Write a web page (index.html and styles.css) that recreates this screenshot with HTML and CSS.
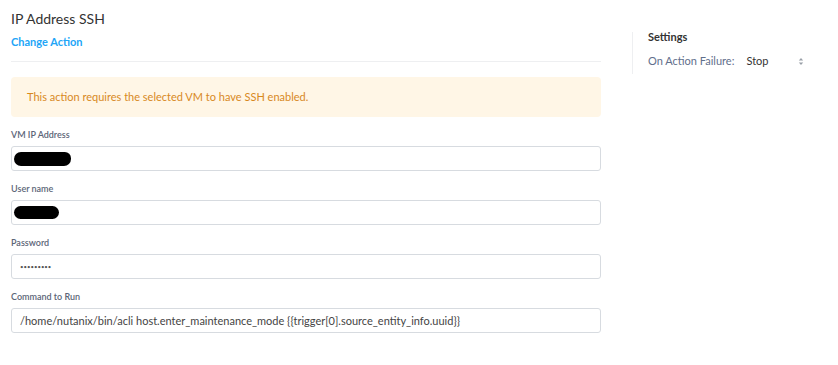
FILE: index.html
```html
<!DOCTYPE html>
<html>
<head>
<meta charset="utf-8">
<link rel="stylesheet" href="styles.css">
</head>
<body>
<div class="page">
  <div class="main">
    <h1 class="title">IP Address SSH</h1>
    <a class="change">Change Action</a>
    <div class="divider"></div>
    <div class="warning">This action requires the selected VM to have SSH enabled.</div>
    <div class="field">
      <div class="label">VM IP Address</div>
      <div class="input"><span class="mask mask1"></span></div>
    </div>
    <div class="field">
      <div class="label">User name</div>
      <div class="input"><span class="mask mask2"></span></div>
    </div>
    <div class="field">
      <div class="label">Password</div>
      <div class="input"><span class="dots">•••••••••</span></div>
    </div>
    <div class="field">
      <div class="label">Command to Run</div>
      <div class="input"><span class="value">/home/nutanix/bin/acli host.enter_maintenance_mode {{trigger[0].source_entity_info.uuid}}</span></div>
    </div>
  </div>
  <div class="side">
    <div class="side-title">Settings</div>
    <div class="side-row">
      <span class="side-label">On Action Failure:</span>
      <span class="side-select">Stop<svg class="updown" width="6" height="9" viewBox="0 0 6 9"><path d="M0.8 3.4 L3 1 L5.2 3.4Z M0.8 5.6 L3 8 L5.2 5.6Z" fill="#9aa0a8"/></svg></span>
    </div>
  </div>
</div>
</body>
</html>
```
FILE: styles.css
```css
* { box-sizing: border-box; }
body {
  margin: 0;
  background: #fff;
  font-family: Lato, "Open Sans", sans-serif;
  color: #333;
}
.page {
  display: flex;
  align-items: flex-start;
}
.main {
  width: 601px;
  padding-left: 11px;
  padding-top: 9px;
}
.title {
  margin: 0;
  font-size: 14px;
  font-weight: 400;
  line-height: 20px;
  color: #333;
}
.change {
  display: block;
  margin-top: 6px;
  font-size: 11px;
  font-weight: 700;
  line-height: 14px;
  color: #22a5f7;
}
.divider {
  margin-top: 12px;
  height: 1px;
  background: #eeeff1;
}
.warning {
  margin-top: 15px;
  height: 40px;
  border-radius: 4px;
  background: #fff6e6;
  color: #d8891e;
  font-size: 11px;
  line-height: 40px;
  padding-left: 16px;
}
.field {
  margin-top: 12px;
}
.label {
  font-size: 9px;
  font-weight: 600;
  color: #5c6577;
  line-height: 12px;
  margin-bottom: 5px;
}
.input {
  height: 25px;
  border: 1px solid #d7dbe0;
  border-radius: 3px;
  display: flex;
  align-items: center;
  padding-left: 8px;
  font-size: 11px;
  color: #444;
}
.mask {
  display: block;
  background: #000;
  margin-left: -6px;
}
.mask1 {
  width: 57px;
  height: 14px;
  border-radius: 8px 7px 8px 8px;
}
.mask2 {
  width: 45px;
  height: 13px;
  border-radius: 7px;
}
.dots {
  font-size: 6px;
  letter-spacing: 0;
  color: #555;
}
.value { font-size: 11px; color: #444; }
.side {
  margin-left: 31px;
  margin-top: 32px;
  border-left: 1px solid #eeeff1;
  padding-left: 15px;
  height: 42px;
  width: 190px;
}
.side-title {
  font-size: 11px;
  font-weight: 700;
  color: #333;
  line-height: 12px;
  margin-top: -1px;
}
.side-row {
  margin-top: 12px;
  display: flex;
  align-items: center;
  font-size: 11px;
  line-height: 12px;
}
.side-label { color: #5f6f8c; }
.side-select {
  margin-left: 12px;
  color: #333;
  display: flex;
  align-items: center;
  width: 58px;
  justify-content: space-between;
}
```
